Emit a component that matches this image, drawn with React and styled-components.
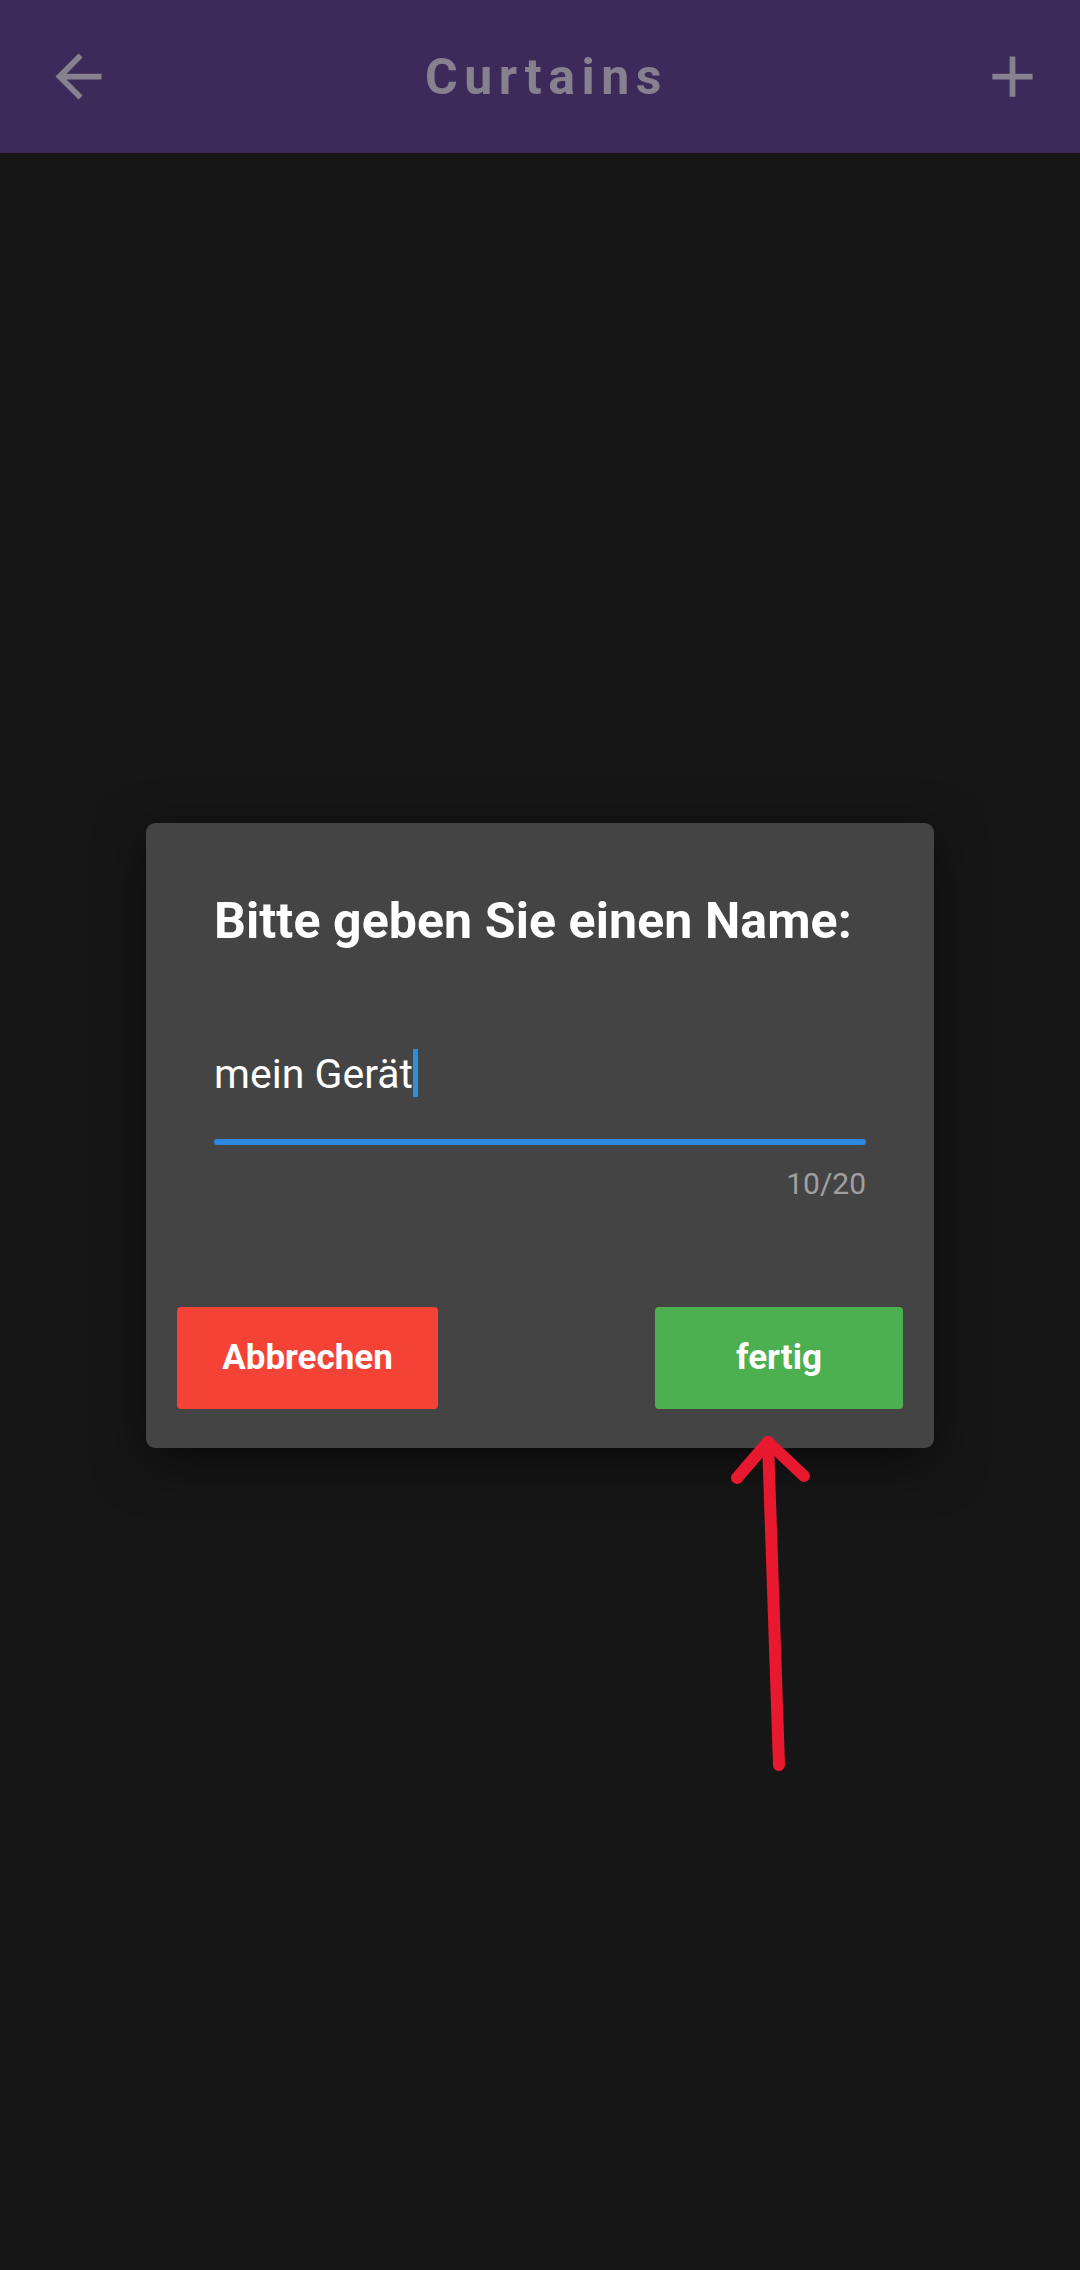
import styled, { createGlobalStyle } from 'styled-components';

const GlobalStyle = createGlobalStyle`
  body {
    margin: 0;
    background: #161616;
    font-family: Roboto, "Liberation Sans", sans-serif;
  }
`;

const Screen = styled.div`
  position: relative;
  width: 1080px;
  height: 2270px;
  display: flex;
  flex-direction: column;
  background: #161616;
  overflow: hidden;
`;

const AppBar = styled.header`
  height: 153px;
  flex-shrink: 0;
  display: flex;
  align-items: center;
  justify-content: space-between;
  padding: 0 33px 0 44px;
  background: #3c2a5a;
`;

const BarIcon = styled.svg`
  width: 69px;
  height: 69px;
  fill: #86808f;
  display: block;
`;

const Title = styled.h1`
  margin: 0 0 0 2px;
  font-size: 50px;
  font-weight: 700;
  letter-spacing: 6.5px;
  color: #86808f;
`;

const Overlay = styled.div`
  position: absolute;
  inset: 0;
  display: flex;
  align-items: center;
  justify-content: center;
`;

const Dialog = styled.div`
  width: 788px;
  box-sizing: border-box;
  padding: 70px 0 39px;
  background: #444444;
  border-radius: 9px;
  box-shadow: 0 14px 50px rgba(0, 0, 0, 0.55);
`;

const DialogTitle = styled.h2`
  margin: 0 68px;
  font-size: 50px;
  line-height: 56px;
  font-weight: 700;
  letter-spacing: 0.1px;
  color: #ffffff;
  white-space: nowrap;
`;

const Field = styled.div`
  margin: 101px 68px 0;
`;

const InputText = styled.div`
  font-size: 41px;
  line-height: 48px;
  color: #ffffff;
  white-space: nowrap;
`;

const Caret = styled.span`
  display: inline-block;
  width: 5px;
  height: 48px;
  margin-top: -1px;
  vertical-align: top;
  background: #2b8fe0;
`;

const Underline = styled.div`
  margin-top: 41px;
  height: 6px;
  border-radius: 3px;
  background: #2e8ae0;
`;

const Counter = styled.div`
  margin-top: 21px;
  text-align: right;
  font-size: 30px;
  line-height: 35px;
  color: #a0a0a0;
`;

const Actions = styled.div`
  display: flex;
  justify-content: space-between;
  padding: 0 31px;
  margin-top: 106px;
`;

const ActionButton = styled.button`
  width: ${(p) => p.$width}px;
  height: 102px;
  border: none;
  border-radius: 4px;
  background: ${(p) => p.$color};
  color: #ffffff;
  font-family: inherit;
  font-size: 35px;
  font-weight: 700;
`;

const Annotation = styled.svg`
  position: absolute;
  left: 720px;
  top: 1420px;
  width: 100px;
  height: 360px;
`;

const App = () => (
  <Screen>
    <GlobalStyle />
    <AppBar>
      <BarIcon viewBox="0 0 24 24">
        <path d="M20 11H7.830l5.590-5.590L12 4l-8 8 8 8 1.410-1.410L7.830 13H20v-2z" />
      </BarIcon>
      <Title>Curtains</Title>
      <BarIcon viewBox="0 0 24 24">
        <path d="M19 13h-6v6h-2v-6H5v-2h6V5h2v6h6v2z" />
      </BarIcon>
    </AppBar>
    <Overlay>
      <Dialog>
        <DialogTitle>Bitte geben Sie einen Name:</DialogTitle>
        <Field>
          <InputText>
            mein Gerät
            <Caret />
          </InputText>
          <Underline />
          <Counter>10/20</Counter>
        </Field>
        <Actions>
          <ActionButton $width={261} $color="#f44336">Abbrechen</ActionButton>
          <ActionButton $width={248} $color="#4caf50">fertig</ActionButton>
        </Actions>
      </Dialog>
    </Overlay>
    <Annotation viewBox="0 0 100 360">
      <g fill="none" stroke="#e8192f" strokeWidth="12" strokeLinecap="round" strokeLinejoin="round">
        <path d="M48 22 L59 345" />
        <path d="M17 58 L48 22 L84 56" />
      </g>
    </Annotation>
  </Screen>
);

export default App;
